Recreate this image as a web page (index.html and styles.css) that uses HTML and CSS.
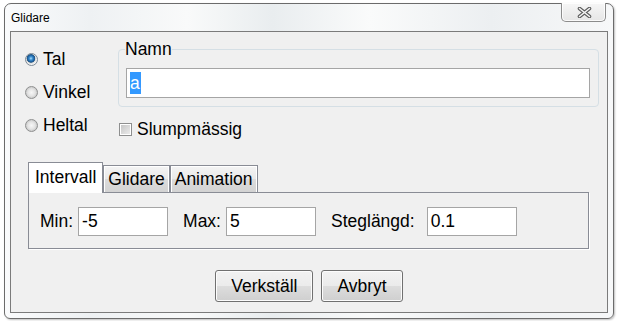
FILE: index.html
```html
<!DOCTYPE html>
<html lang="sv">
<head>
    <meta charset="UTF-8">
    <title>Glidare</title>
    <link rel="stylesheet" href="styles.css">
</head>
<body>
    <div class="window">
        <div class="titlebar">
            <span class="title">Glidare</span>
            <div class="close-btn">
                <svg width="15" height="11" viewBox="0 0 15 11">
                    <path d="M2.5 1.5 L12.5 9.5 M12.5 1.5 L2.5 9.5" stroke="#5b5b5b" stroke-width="3.6" stroke-linecap="round"/>
                    <path d="M2.5 1.5 L12.5 9.5 M12.5 1.5 L2.5 9.5" stroke="#f4f4f4" stroke-width="1.6" stroke-linecap="round"/>
                </svg>
            </div>
        </div>
        <div class="client">
            <div class="top">
                <div class="type-list">
                    <label class="opt"><input type="radio" name="typ" checked> Tal</label>
                    <label class="opt"><input type="radio" name="typ"> Vinkel</label>
                    <label class="opt"><input type="radio" name="typ"> Heltal</label>
                </div>
                <div class="name-col">
                    <fieldset class="name-box">
                        <legend>Namn</legend>
                        <div class="textbox"><span class="sel">a</span></div>
                    </fieldset>
                    <label class="opt check"><input type="checkbox"> Slumpmässig</label>
                </div>
            </div>
            <div class="tabs">
                <div class="tab-strip">
                    <div class="tab active">Intervall</div>
                    <div class="tab">Glidare</div>
                    <div class="tab">Animation</div>
                </div>
                <div class="tab-panel">
                    <span class="lbl">Min:</span>
                    <div class="textbox small">-5</div>
                    <span class="lbl">Max:</span>
                    <div class="textbox small">5</div>
                    <span class="lbl step">Steglängd:</span>
                    <div class="textbox small">0.1</div>
                </div>
            </div>
            <div class="buttons">
                <button>Verkställ</button>
                <button>Avbryt</button>
            </div>
        </div>
    </div>
</body>
</html>
```

FILE: styles.css
```css
body {
    margin: 0;
    width: 619px;
    height: 321px;
    overflow: hidden;
    background-color: #fff;
    font-family: "Liberation Sans", Arial, sans-serif;
    font-size: 17.5px;
    color: #000;
}

.window {
    margin: 3px 0 0 4px;
    width: 610px;
    height: 316px;
    box-sizing: border-box;
    padding: 0 5px 5px;
    border: 1px solid #6b6b6b;
    border-radius: 7px 7px 6px 6px;
    background: linear-gradient(90deg, #fafbfc 0%, #eef1f3 14%, #f9fafa 30%, #e9edef 44%, #fafbfb 60%, #eceff1 80%, #f7f8f9 100%);
    box-shadow: 1px 1px 2px rgba(0, 0, 0, 0.25);
}

.titlebar {
    height: 27px;
    display: flex;
    justify-content: space-between;
    align-items: center;
    padding-left: 1px;
}

.title {
    font-size: 12px;
}

.close-btn {
    align-self: flex-start;
    margin: -1px 2px 0 0;
    width: 45px;
    height: 19px;
    box-sizing: border-box;
    border: 1px solid #8c8c8c;
    border-top: none;
    border-radius: 0 0 5px 5px;
    background: linear-gradient(#f6f6f6, #e6e6e6);
    box-shadow: inset 0 0 0 1px rgba(255, 255, 255, 0.8);
    display: flex;
    justify-content: center;
    align-items: center;
    padding-left: 2px;
}

.client {
    height: 282px;
    box-sizing: border-box;
    border: 1px solid #7b7b7b;
    background-color: #f0f0f0;
}

.top {
    display: flex;
    align-items: flex-start;
    padding-left: 14px;
}

.type-list {
    width: 93px;
    margin-top: 11px;
    display: flex;
    flex-direction: column;
}

.opt {
    display: flex;
    align-items: center;
    gap: 5px;
    height: 33px;
}

.opt input {
    appearance: none;
    margin: 0;
    width: 13px;
    height: 13px;
    box-sizing: border-box;
    border: 1px solid #8e8f8f;
}

.opt input[type=radio] {
    border-radius: 50%;
    background: radial-gradient(circle, #f7f7f7 0, #e4e4e4 45%, #cdcdcd 70%, #f2f2f2 100%);
}

.opt input[type=radio]:checked {
    border-color: #7d8a96;
    background: radial-gradient(circle at 45% 40%, #b4e2fb 0, #3f93d4 1.6px, #1b5c9b 3.4px, #2b5c86 4px, #dadada 4.6px, #f3f3f3 6px);
}

.opt input[type=checkbox] {
    background: linear-gradient(135deg, #c2c2c2, #efefef);
    box-shadow: inset 0 0 0 1px #fff;
}

.name-col {
    width: 481px;
    margin-top: 8px;
}

.name-box {
    margin: 0;
    min-width: 0;
    padding: 0 8px 8px 6px;
    border: 1px solid #d5dfe5;
    border-radius: 4px;
}

.name-box legend {
    padding: 0;
    line-height: 18px;
}

.textbox {
    height: 30px;
    box-sizing: border-box;
    border: 1px solid #a5a5a5;
    background-color: #fff;
    padding: 0 3px;
    display: flex;
    align-items: center;
}

.name-box .textbox {
    margin: 10px 0 0 1px;
}

.sel {
    background-color: #3399ff;
    color: #fff;
    line-height: 22px;
    padding-right: 1px;
}

.check {
    height: 20px;
    margin: 12px 0 0 1px;
}

.tabs {
    width: 561px;
    margin: 20px 0 0 17px;
}

.tab-strip {
    display: flex;
    align-items: flex-end;
}

.tab {
    height: 27px;
    box-sizing: border-box;
    padding: 1px 4px 0;
    border: 1px solid #898c95;
    border-bottom: none;
    background: linear-gradient(#f4f4f4, #e9e9e9 50%, #dcdcdc 50%, #d3d3d3);
    box-shadow: inset 1px 1px 0 #fff, inset -1px 0 0 #fff;
    display: flex;
    align-items: center;
}

.tab.active {
    height: 31px;
    margin-bottom: -1px;
    padding: 0 6px 1px;
    background: #fff;
    box-shadow: none;
    position: relative;
}

.tab-panel {
    height: 57px;
    box-sizing: border-box;
    border: 1px solid #898c95;
    background-color: #f0f0f0;
    box-shadow: 1px 1px 0 #fff;
    display: flex;
    align-items: center;
    padding: 2px 0 0 11px;
}

.lbl {
    margin-right: 5px;
}

.lbl.step {
    margin-right: 12px;
}

.textbox.small {
    width: 90px;
    height: 29px;
    margin-right: 15px;
}

.buttons {
    display: flex;
    justify-content: center;
    gap: 8px;
    margin-top: 21px;
}

button {
    height: 32px;
    padding: 0 15px;
    font: inherit;
    color: #000;
    border: 1px solid #707070;
    border-radius: 3px;
    background: linear-gradient(#f2f2f2, #ebebeb 50%, #dddddd 51%, #cfcfcf);
    box-shadow: inset 0 0 0 1px #fcfcfc;
}
```
